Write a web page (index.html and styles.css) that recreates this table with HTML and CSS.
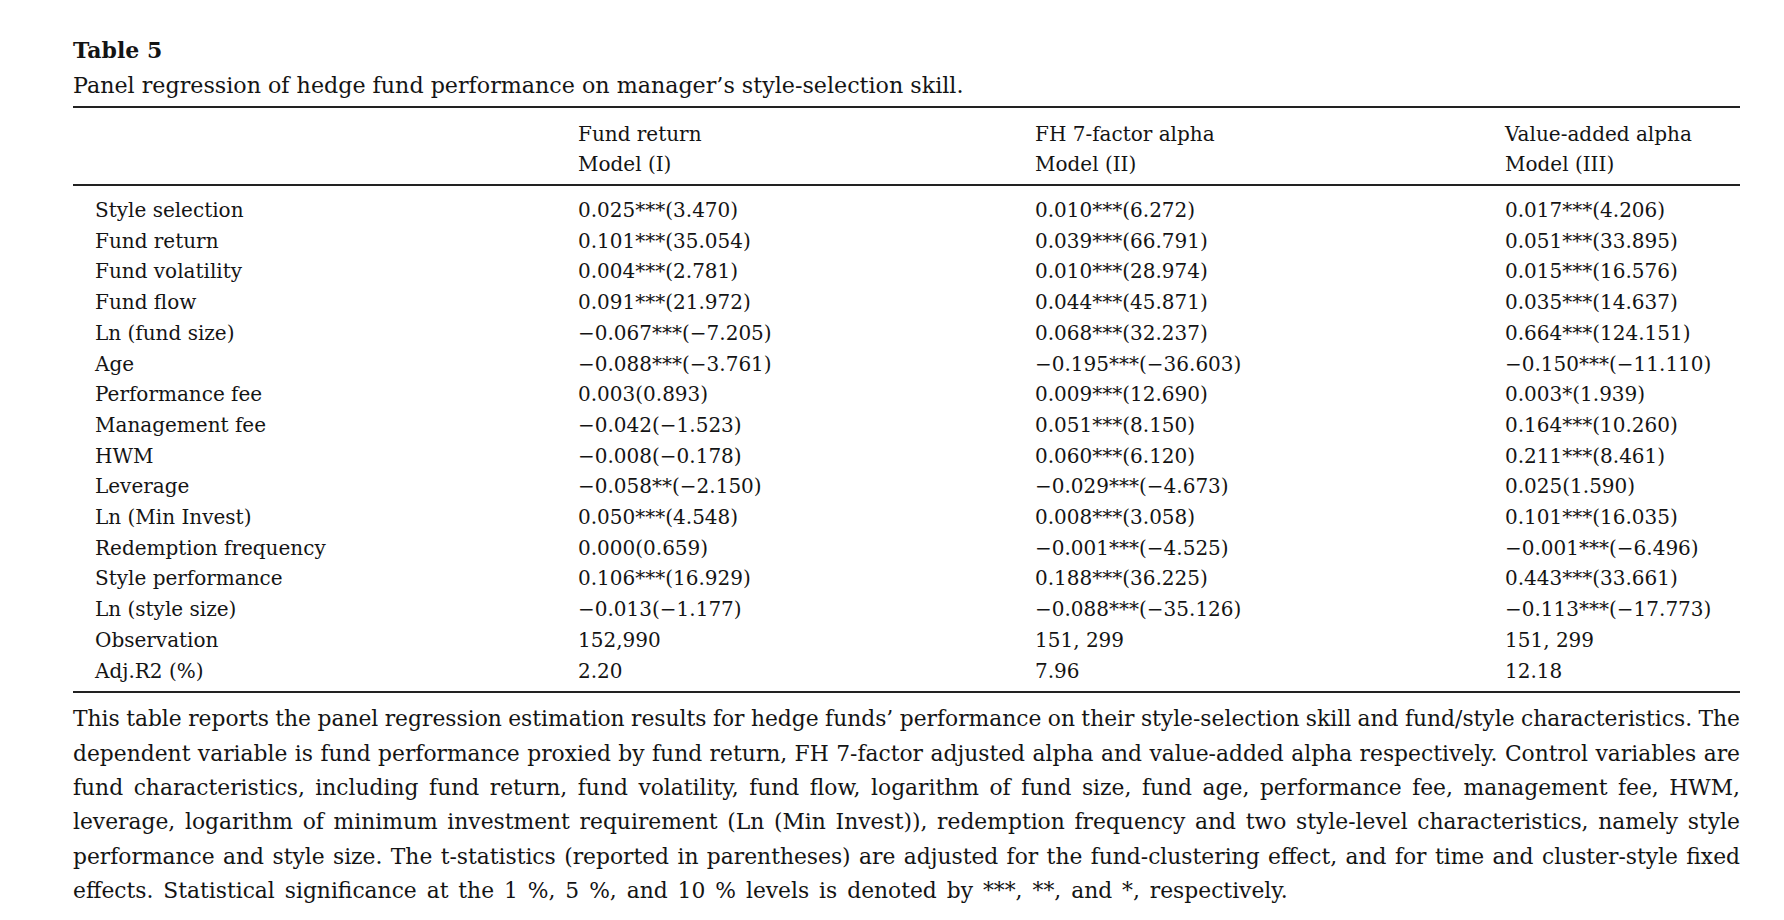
FILE: index.html
```html
<!DOCTYPE html>
<html lang="en">
<head>
<meta charset="utf-8">
<title>Table 5</title>
<link rel="stylesheet" href="styles.css">
</head>
<body>
<div class="page">
  <div class="title">Table 5</div>
  <div class="subtitle">Panel regression of hedge fund performance on manager’s style-selection skill.</div>
  <table class="reg">
    <colgroup>
      <col class="c0"><col class="c1"><col class="c2"><col class="c3">
    </colgroup>
    <thead>
      <tr>
        <th></th>
        <th>Fund return<br>Model (I)</th>
        <th>FH 7-factor alpha<br>Model (II)</th>
        <th>Value-added alpha<br>Model (III)</th>
      </tr>
    </thead>
    <tbody>
      <tr class="first"><td>Style selection</td><td>0.025***(3.470)</td><td>0.010***(6.272)</td><td>0.017***(4.206)</td></tr>
      <tr><td>Fund return</td><td>0.101***(35.054)</td><td>0.039***(66.791)</td><td>0.051***(33.895)</td></tr>
      <tr><td>Fund volatility</td><td>0.004***(2.781)</td><td>0.010***(28.974)</td><td>0.015***(16.576)</td></tr>
      <tr><td>Fund flow</td><td>0.091***(21.972)</td><td>0.044***(45.871)</td><td>0.035***(14.637)</td></tr>
      <tr><td>Ln (fund size)</td><td>−0.067***(−7.205)</td><td>0.068***(32.237)</td><td>0.664***(124.151)</td></tr>
      <tr><td>Age</td><td>−0.088***(−3.761)</td><td>−0.195***(−36.603)</td><td>−0.150***(−11.110)</td></tr>
      <tr><td>Performance fee</td><td>0.003(0.893)</td><td>0.009***(12.690)</td><td>0.003*(1.939)</td></tr>
      <tr><td>Management fee</td><td>−0.042(−1.523)</td><td>0.051***(8.150)</td><td>0.164***(10.260)</td></tr>
      <tr><td>HWM</td><td>−0.008(−0.178)</td><td>0.060***(6.120)</td><td>0.211***(8.461)</td></tr>
      <tr><td>Leverage</td><td>−0.058**(−2.150)</td><td>−0.029***(−4.673)</td><td>0.025(1.590)</td></tr>
      <tr><td>Ln (Min Invest)</td><td>0.050***(4.548)</td><td>0.008***(3.058)</td><td>0.101***(16.035)</td></tr>
      <tr><td>Redemption frequency</td><td>0.000(0.659)</td><td>−0.001***(−4.525)</td><td>−0.001***(−6.496)</td></tr>
      <tr><td>Style performance</td><td>0.106***(16.929)</td><td>0.188***(36.225)</td><td>0.443***(33.661)</td></tr>
      <tr><td>Ln (style size)</td><td>−0.013(−1.177)</td><td>−0.088***(−35.126)</td><td>−0.113***(−17.773)</td></tr>
      <tr><td>Observation</td><td>152,990</td><td>151, 299</td><td>151, 299</td></tr>
      <tr class="last"><td>Adj.R2 (%)</td><td>2.20</td><td>7.96</td><td>12.18</td></tr>
    </tbody>
  </table>
  <div class="note">
    <span class="ln">This table reports the panel regression estimation results for hedge funds’ performance on their style-selection skill and fund/style characteristics. The</span>
    <span class="ln">dependent variable is fund performance proxied by fund return, FH 7-factor adjusted alpha and value-added alpha respectively. Control variables are</span>
    <span class="ln">fund characteristics, including fund return, fund volatility, fund flow, logarithm of fund size, fund age, performance fee, management fee, HWM,</span>
    <span class="ln">leverage, logarithm of minimum investment requirement (Ln (Min Invest)), redemption frequency and two style-level characteristics, namely style</span>
    <span class="ln">performance and style size. The t-statistics (reported in parentheses) are adjusted for the fund-clustering effect, and for time and cluster-style fixed</span>
    <span class="ln end">effects. Statistical significance at the 1 %, 5 %, and 10 % levels is denoted by ***, **, and *, respectively.</span>
  </div>
</div>
</body>
</html>
```

FILE: styles.css
```css
html, body {
  margin: 0;
  padding: 0;
  background: #ffffff;
}

body {
  font-family: "DejaVu Serif", "Liberation Serif", serif;
  color: #141414;
}

.page {
  width: 1667px;
  padding: 35px 0 0 73px;
}

.title {
  font-size: 22px;
  font-weight: bold;
  line-height: 30px;
}

.subtitle {
  margin-top: 3px;
  font-size: 22.2px;
  line-height: 34px;
}

.reg {
  margin-top: 4px;
  width: 1667px;
  table-layout: fixed;
  border-collapse: collapse;
  border-top: 2px solid #222;
  border-bottom: 2px solid #222;
  font-size: 20px;
}

.c0 { width: 505px; }
.c1 { width: 457px; }
.c2 { width: 470px; }
.c3 { width: 235px; }

.reg th {
  font-weight: normal;
  text-align: left;
  vertical-align: top;
  line-height: 30px;
  padding: 11px 0 5px 0;
  border-bottom: 2px solid #222;
}

.reg td {
  padding: 0;
  line-height: 30.7px;
  white-space: nowrap;
}

.reg td:first-child {
  padding-left: 22px;
}

.reg tr.first td {
  padding-top: 9px;
}

.reg tr.last td {
  padding-bottom: 5px;
}

.note {
  margin-top: 9px;
  font-size: 21.8px;
  line-height: 34.4px;
  word-spacing: -1.5px;
}

.note .ln {
  display: block;
  white-space: nowrap;
  text-align: justify;
  text-align-last: justify;
}

.note .ln.end {
  text-align-last: left;
  word-spacing: 3px;
}
```
